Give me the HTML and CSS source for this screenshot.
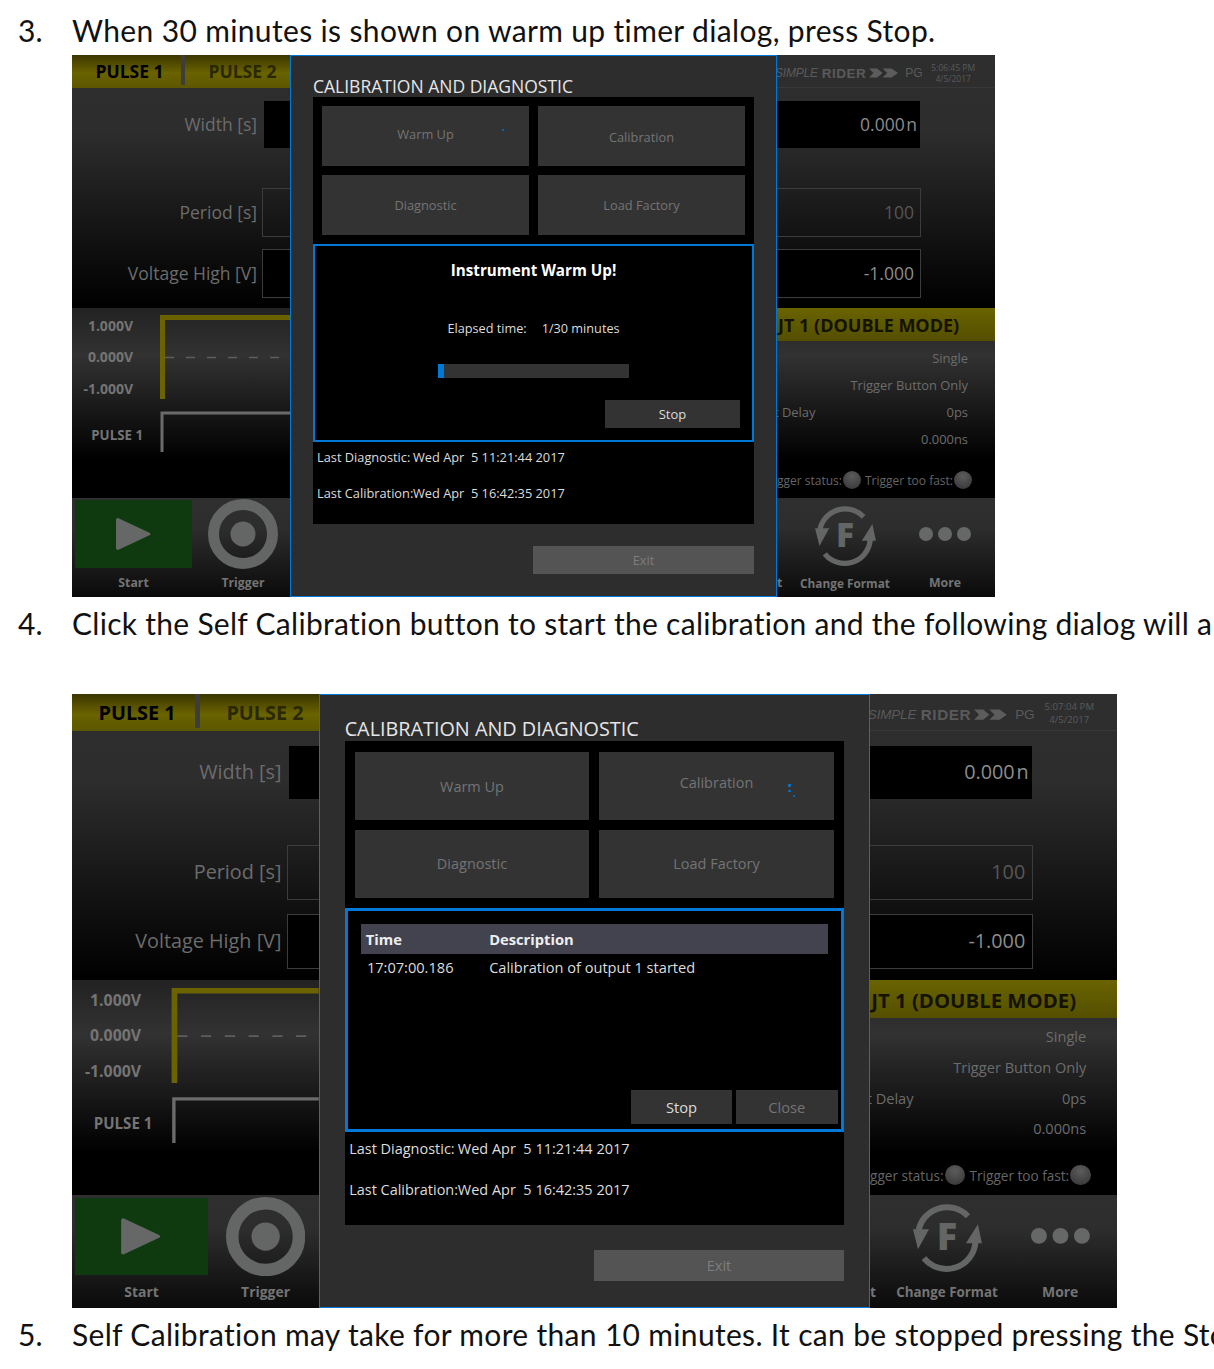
FILE: index.html
```html
<!DOCTYPE html>
<html lang="en">
<head>
<meta charset="utf-8">
<title>Calibration steps</title>
<link rel="stylesheet" href="styles.css">
</head>
<body>
<p class="step step-3"><span class="num">3.</span><span>When 30 minutes is shown on warm up timer dialog, press Stop.</span></p>

<section class="screen">
  <div class="band band-upper">
    <div class="side">
      <div class="tabs"><span class="tab tab-on">PULSE 1</span><span class="tab-sep"></span><span class="tab">PULSE 2</span></div>
      <div class="form-row row-width"><label>Width [s]</label><span class="stub stub-black"></span></div>
      <div class="form-row row-period"><label>Period [s]</label><span class="stub stub-line"></span></div>
      <div class="form-row row-volt"><label>Voltage High [V]</label><span class="stub stub-black stub-line"></span></div>
    </div>
    <div class="side side-right">
      <div class="logo-row">
        <span class="logo-a logo-simple">SIMPLE</span><span class="logo-b">RIDER</span>
        <svg class="chev" viewBox="0 0 32 10"><path d="M0 0h9l6 5-6 5H0l5-5zM15 0h10l7 5-7 5H15l5-5z"/></svg>
        <span class="logo-a logo-pg">PG</span>
        <span class="clock">5:06:45 PM<br>4/5/2017</span>
      </div>
      <div class="field field-black row-width">0.000 n</div>
      <div class="field field-line row-period dim">100</div>
      <div class="field field-black field-line row-volt">-1.000</div>
    </div>
  </div>
  <div class="band band-mid">
    <div class="side">
      <svg class="chart" viewBox="0 0 218 190">
        <path class="wave-a" d="M90.500 91V9.500H218"/>
        <path class="dash" d="M93 49.500H212"/>
        <path class="wave-b" d="M90 144V105H218"/>
        <text class="axis" x="61" y="23">1.000V</text>
        <text class="axis" x="61" y="54">0.000V</text>
        <text class="axis" x="61" y="86">-1.000V</text>
        <text class="axis axis-name" x="71" y="132">PULSE 1</text>
      </svg>
    </div>
    <div class="side side-right">
      <div class="out-head">JT 1 (DOUBLE MODE)</div>
      <ul class="props">
        <li><span></span><span>Single</span></li>
        <li><span></span><span>Trigger Button Only</span></li>
        <li><span class="prop-cut">t Delay</span><span>0ps</span></li>
        <li><span></span><span>0.000ns</span></li>
      </ul>
      <div class="status"><span>gger status:</span><i class="led"></i><span class="status-2">Trigger too fast:</span><i class="led"></i></div>
    </div>
  </div>
  <div class="band band-low">
    <div class="side side-tools">
      <div class="tool tool-start">
        <div class="tool-art art-green"><svg class="ico-play" viewBox="0 0 38 36"><path d="M3 2 35 17a1.500 1.500 0 0 1 0 2L3 34a2 2 0 0 1-2-2V4a2 2 0 0 1 2-2z"/></svg></div>
        <span class="tool-label">Start</span>
      </div>
      <div class="tool tool-trigger">
        <div class="tool-art"><svg class="ico-trig" viewBox="0 0 70 70"><circle cx="35" cy="35" r="29.500" class="ring"/><circle cx="35" cy="35" r="12.500" class="dot"/></svg></div>
        <span class="tool-label">Trigger</span>
      </div>
    </div>
    <div class="side side-right side-tools">
      <span class="tool-label stray">t</span>
      <div class="tool tool-format">
        <div class="tool-art"><svg class="ico-f" viewBox="0 0 85 80"><path class="arc" d="M63 20A29 29 0 0 0 13.600 34"/><path class="arc" d="M19 62A29 29 0 0 0 70.500 46"/><path class="bolt" d="M8 33H24L13 53zM73 28 61 47H77z"/><text class="f-glyph" x="42" y="54">F</text></svg></div>
        <span class="tool-label tool-label-tight">Change Format</span>
      </div>
      <div class="tool tool-more">
        <div class="tool-art"><svg class="ico-more" viewBox="0 0 52 14"><circle cx="7" cy="7" r="7"/><circle cx="26" cy="7" r="7"/><circle cx="45" cy="7" r="7"/></svg></div>
        <span class="tool-label">More</span>
      </div>
    </div>
  </div>

  <div class="dialog">
    <h2 class="dlg-title">CALIBRATION AND DIAGNOSTIC</h2>
    <div class="panel">
      <div class="btn-grid">
        <div class="btn btn-up">Warm Up<span class="spin spin-1"></span></div>
        <div class="btn btn-down">Calibration</div>
        <div class="btn">Diagnostic</div>
        <div class="btn">Load Factory</div>
      </div>
      <div class="box box-warm">
        <div class="warm-head">Instrument Warm Up!</div>
        <div class="elapsed"><span>Elapsed time:</span><span>1/30 minutes</span></div>
        <div class="progress"><div class="progress-fill"></div></div>
        <div class="actions"><div class="act act-warm">Stop</div></div>
      </div>
      <div class="last"><span class="last-k">Last Diagnostic:</span><span class="last-v">Wed Apr  5 11:21:44 2017</span></div>
      <div class="last last-2"><span class="last-k">Last Calibration:</span><span class="last-v">Wed Apr  5 16:42:35 2017</span></div>
    </div>
    <div class="exit">Exit</div>
  </div>
</section>

<p class="step step-4"><span class="num">4.</span><span>Click the Self Calibration button to start the calibration and the following dialog will a</span></p>

<section class="screen screen-wide">
  <div class="band band-upper">
    <div class="side">
      <div class="tabs"><span class="tab tab-on">PULSE 1</span><span class="tab-sep"></span><span class="tab">PULSE 2</span></div>
      <div class="form-row row-width"><label>Width [s]</label><span class="stub stub-black"></span></div>
      <div class="form-row row-period"><label>Period [s]</label><span class="stub stub-line"></span></div>
      <div class="form-row row-volt"><label>Voltage High [V]</label><span class="stub stub-black stub-line"></span></div>
    </div>
    <div class="side side-right">
      <div class="logo-row">
        <span class="logo-a logo-simple">SIMPLE</span><span class="logo-b">RIDER</span>
        <svg class="chev" viewBox="0 0 32 10"><path d="M0 0h9l6 5-6 5H0l5-5zM15 0h10l7 5-7 5H15l5-5z"/></svg>
        <span class="logo-a logo-pg">PG</span>
        <span class="clock">5:07:04 PM<br>4/5/2017</span>
      </div>
      <div class="field field-black row-width">0.000 n</div>
      <div class="field field-line row-period dim">100</div>
      <div class="field field-black field-line row-volt">-1.000</div>
    </div>
  </div>
  <div class="band band-mid">
    <div class="side">
      <svg class="chart" viewBox="0 0 218 190">
        <path class="wave-a" d="M90.500 91V9.500H218"/>
        <path class="dash" d="M93 49.500H212"/>
        <path class="wave-b" d="M90 144V105H218"/>
        <text class="axis" x="61" y="23">1.000V</text>
        <text class="axis" x="61" y="54">0.000V</text>
        <text class="axis" x="61" y="86">-1.000V</text>
        <text class="axis axis-name" x="71" y="132">PULSE 1</text>
      </svg>
    </div>
    <div class="side side-right">
      <div class="out-head">JT 1 (DOUBLE MODE)</div>
      <ul class="props">
        <li><span></span><span>Single</span></li>
        <li><span></span><span>Trigger Button Only</span></li>
        <li><span class="prop-cut">t Delay</span><span>0ps</span></li>
        <li><span></span><span>0.000ns</span></li>
      </ul>
      <div class="status"><span>gger status:</span><i class="led"></i><span class="status-2">Trigger too fast:</span><i class="led"></i></div>
    </div>
  </div>
  <div class="band band-low">
    <div class="side side-tools">
      <div class="tool tool-start">
        <div class="tool-art art-green"><svg class="ico-play" viewBox="0 0 38 36"><path d="M3 2 35 17a1.500 1.500 0 0 1 0 2L3 34a2 2 0 0 1-2-2V4a2 2 0 0 1 2-2z"/></svg></div>
        <span class="tool-label">Start</span>
      </div>
      <div class="tool tool-trigger">
        <div class="tool-art"><svg class="ico-trig" viewBox="0 0 70 70"><circle cx="35" cy="35" r="29.500" class="ring"/><circle cx="35" cy="35" r="12.500" class="dot"/></svg></div>
        <span class="tool-label">Trigger</span>
      </div>
    </div>
    <div class="side side-right side-tools">
      <span class="tool-label stray">t</span>
      <div class="tool tool-format">
        <div class="tool-art"><svg class="ico-f" viewBox="0 0 85 80"><path class="arc" d="M63 20A29 29 0 0 0 13.600 34"/><path class="arc" d="M19 62A29 29 0 0 0 70.500 46"/><path class="bolt" d="M8 33H24L13 53zM73 28 61 47H77z"/><text class="f-glyph" x="42" y="54">F</text></svg></div>
        <span class="tool-label tool-label-tight">Change Format</span>
      </div>
      <div class="tool tool-more">
        <div class="tool-art"><svg class="ico-more" viewBox="0 0 52 14"><circle cx="7" cy="7" r="7"/><circle cx="26" cy="7" r="7"/><circle cx="45" cy="7" r="7"/></svg></div>
        <span class="tool-label">More</span>
      </div>
    </div>
  </div>

  <div class="dialog">
    <h2 class="dlg-title">CALIBRATION AND DIAGNOSTIC</h2>
    <div class="panel">
      <div class="btn-grid">
        <div class="btn btn-up2">Warm Up</div>
        <div class="btn btn-cal">Calibration<span class="spin spin-2"></span><span class="spin spin-3"></span><span class="spin spin-4"></span></div>
        <div class="btn">Diagnostic</div>
        <div class="btn">Load Factory</div>
      </div>
      <div class="box box-log">
        <div class="log-head"><span class="log-time">Time</span><span>Description</span></div>
        <div class="log-row"><span class="log-time">17:07:00.186</span><span>Calibration of output 1 started</span></div>
        <div class="actions">
          <div class="act act-log">Stop</div>
          <div class="act act-log act-off">Close</div>
        </div>
      </div>
      <div class="last"><span class="last-k">Last Diagnostic:</span><span class="last-v">Wed Apr  5 11:21:44 2017</span></div>
      <div class="last last-2"><span class="last-k">Last Calibration:</span><span class="last-v">Wed Apr  5 16:42:35 2017</span></div>
    </div>
    <div class="exit">Exit</div>
  </div>
</section>

<p class="step step-5"><span class="num">5.</span><span>Self Calibration may take for more than 10 minutes. It can be stopped pressing the Sto</span></p>
<div class="cut-mark"></div>
</body>
</html>
```
FILE: styles.css
```css
* { box-sizing: border-box; }
html, body { margin: 0; padding: 0; background: #fff; overflow: hidden; height: 1369px; }
body { font-family: "Lato", "Open Sans", sans-serif; color: #111; }

.step {
  margin: 0; display: flex; white-space: nowrap; width: 1214px; overflow: hidden;
  font-size: 30px; padding-left: 18px; line-height: 40px;
  font-variant-ligatures: none; letter-spacing: .35px;
}
.num { width: 54px; flex: none; letter-spacing: 0; }
.step-3 { height: 55px; padding-top: 10px; }
.step-4 { height: 97px; padding-top: 6px; letter-spacing: .28px; }
.step-5 { height: 58px; padding-top: 6px; letter-spacing: .32px; }
.cut-mark { width: 3px; height: 1px; margin-left: 74px; margin-top: 4px; background: #888; }

.screen {
  position: relative; width: 923px; height: 542px; margin-left: 72px; overflow: hidden;
  display: flex; flex-direction: column;
  font-family: "Open Sans", "Noto Sans", sans-serif; color: #6c6c6c;
}
.screen-wide { zoom: 1.132; margin-left: 63.6px; }

.band { display: flex; justify-content: space-between; flex: none; }
.band-upper { height: 253px; background: linear-gradient(#2e2e2e 0, #2d2d2d 30%, #000 100%); }
.band-mid { height: 190px; background: linear-gradient(#222 0, #323232 25%, #000 80%); }
.band-low { height: 99px; background: linear-gradient(#2f2f2f 0, #2d2d2d 30%, #0a0a0a 100%); }
.side { width: 218px; flex: none; }

.tabs {
  height: 33px; display: flex; align-items: center; padding-bottom: 1px;
  background: linear-gradient(#3a3600, #6a6300 55%, #5c5600);
  font-size: 17.500px; font-weight: 700; color: #2a2800;
}
.tab { flex: 1; text-align: center; padding-left: 10px; }
.tab-on { color: #000; flex: none; width: 109px; padding-left: 6px; }
.tab-sep { width: 4px; height: 30px; background: #3d3d3d; flex: none; margin-bottom: 2px; }

.form-row { display: flex; justify-content: flex-end; align-items: center; gap: 5px; height: 49px; font-size: 17.500px; }
.form-row label { padding-bottom: 2px; }
.form-row.row-width { margin-top: 13px; height: 47px; gap: 7px; }
.form-row.row-period { margin-top: 40px; }
.form-row.row-volt { margin-top: 12px; }
.stub { width: 28px; height: 100%; }
.row-width .stub { width: 26px; }
.stub-black { background: #000; }
.stub-line { border: 1px solid #3c3c3c; border-right: 0; }

.side-right { display: flex; flex-direction: column; }
.logo-row {
  height: 33px; display: flex; align-items: center; padding-top: 4px;
  border-bottom: 1px solid #383838; font-family: "Liberation Sans", sans-serif;
  color: #5a5a5a; font-size: 12px; white-space: nowrap;
}
.logo-a { font-style: italic; font-weight: 400; letter-spacing: -0.2px; }
.logo-simple { margin-left: -2px; }
.logo-b { font-weight: 700; margin-left: 4px; font-size: 13.500px; letter-spacing: .5px; }
.logo-pg { font-style: normal; margin-left: 7px; }
.chev { width: 29px; height: 10px; margin-left: 3px; fill: #5c5c5c; }
.clock { margin-left: 9px; font-size: 8.500px; line-height: 11px; text-align: center; font-family: "Open Sans", sans-serif; margin-top: -1px; }

.field {
  width: 144px; height: 49px; display: flex; align-items: center; justify-content: flex-end;
  padding: 0 6px 2px 0; font-size: 17.500px; color: #8c8c8c;
}
.field.row-width { margin-top: 13px; height: 47px; width: 143px; padding-right: 3px; word-spacing: -3px; }
.field.row-period { margin-top: 40px; }
.field.row-volt { margin-top: 12px; }
.field-black { background: #000; }
.field-line { border: 1px solid #3c3c3c; border-left: 0; }
.dim { color: #565656; }

.chart { display: block; width: 218px; height: 190px; }
.chart path { fill: none; }
.wave-a { stroke: #6a6300; stroke-width: 5; }
.wave-b { stroke: #6b6b6b; stroke-width: 3; }
.dash { stroke: #5e5e5e; stroke-width: 1.500; stroke-dasharray: 9 12; }
.axis { font-family: "Open Sans", sans-serif; font-size: 14px; font-weight: 700; fill: #747474; text-anchor: end; }
.axis-name { font-size: 13.300px; }

.out-head {
  height: 33px; display: flex; align-items: center; padding: 1px 0 0 1px;
  background: linear-gradient(#6a6300, #544f00);
  font-size: 18px; font-weight: 700; color: #141200; white-space: nowrap;
}
.props { list-style: none; margin: 0; padding: 3px 27px 0 5px; font-size: 12.900px; }
.props li { display: flex; justify-content: space-between; height: 27px; align-items: center; }
.prop-cut { margin-left: -8px; }
.status { display: flex; align-items: center; margin-top: 19px; font-size: 12px; white-space: nowrap; color: #666; }
.status-2 { margin-left: 4px; }
.led {
  width: 18px; height: 18px; border-radius: 50%; margin-left: 1px; flex: none;
  background: radial-gradient(circle at 50% 30%, #5c5c5c, #3b3b3b 80%);
}

.side-tools { display: flex; flex-direction: row; align-items: flex-start; position: relative; }
.tool { display: flex; flex-direction: column; align-items: center; }
.tool-art { height: 68px; margin-top: 2px; display: flex; align-items: center; justify-content: center; }
.tool-label { font-size: 12.300px; font-weight: 700; color: #747474; white-space: nowrap; margin-top: 7px; line-height: 16px; }
.tool-label-tight { font-size: 11.800px; }
.tool-start { width: 119px; margin-left: 2px; }
.art-green { width: 117px; background: #0f3a10; }
.ico-play { width: 38px; height: 36px; fill: #666867; }
.tool-trigger { width: 70px; margin-left: 15px; }
.ico-trig { width: 70px; height: 70px; flex: none; }
.ring { fill: none; stroke: #646665; stroke-width: 11; }
.dot { fill: #646665; }
.stray { margin-top: 77px; width: 6px; }
.tool-format { width: 110px; margin-left: 7px; }
.ico-f { width: 75px; height: 71px; flex: none; }
.arc { fill: none; stroke: #646665; stroke-width: 6; }
.bolt { fill: #646665; }
.f-glyph { font-family: "Open Sans", sans-serif; font-size: 38px; font-weight: 800; fill: #646665; text-anchor: middle; }
.tool-more { width: 70px; margin-left: 10px; }
.ico-more { width: 52px; height: 14px; fill: #666867; }

.dialog {
  position: absolute; left: 218px; top: 0; width: 487px; height: 542px;
  border: 1px solid #0078d7; background: #2d2d2d; padding: 0 22px;
  display: flex; flex-direction: column;
}
.dlg-title {
  margin: 0; height: 41px; flex: none; display: flex; align-items: flex-end;
  font-size: 17.500px; font-weight: 400; color: #e6e6e6; line-height: 22px; white-space: nowrap;
}
.panel { background: #000; height: 427px; flex: none; display: flex; flex-direction: column; }
.btn-grid { padding: 9px; display: grid; grid-template-columns: 207px 207px; grid-auto-rows: 60px; gap: 9px; }
.btn {
  background: #333; color: #747474; font-size: 12.800px; position: relative;
  display: flex; align-items: center; justify-content: center;
}
.btn-up { padding-bottom: 5px; }
.btn-down { padding-top: 2px; }
.btn-up2 { padding-top: 1px; }
.btn-cal { padding-bottom: 6px; }
.spin { position: absolute; width: 2px; height: 2px; border-radius: 50%; background: #0078d7; }
.spin-1 { left: 180px; top: 23px; }
.spin-2 { left: 167px; top: 29px; }
.spin-3 { left: 167px; top: 34px; }
.spin-4 { left: 171px; top: 38px; }

.box { height: 198px; flex: none; border: 2.700px solid #0078d7; display: flex; flex-direction: column; color: #ddd; }
.box-warm { align-items: center; }
.warm-head { margin-top: 14px; line-height: 20px; font-size: 15.200px; font-weight: 700; color: #fff; }
.elapsed { margin-top: 38px; line-height: 20px; font-size: 12.700px; display: flex; gap: 15px; color: #ddd; }
.progress { margin-top: 26px; width: 191px; height: 14px; background: #333; flex: none; }
.progress-fill { width: 6px; height: 100%; background: #0078d7; }
.actions { margin-top: auto; display: flex; justify-content: flex-end; gap: 3px; align-self: stretch; }
.box-warm .actions { margin: auto 12px 12px 0; }
.act { height: 28px; background: #333; display: flex; align-items: center; justify-content: center; font-size: 13px; color: #dcdcdc; }
.act-warm { width: 135px; }
.box-log .actions { margin: auto 3px 4px 0; }
.act-log { width: 90px; height: 30px; }
.act-off { color: #747474; }

.log-head { margin: 12px 12px 0; height: 26.500px; background: #434350; display: flex; align-items: center; font-size: 13px; font-weight: 700; color: #eee; }
.log-row { margin: 1px 12px 0; height: 20px; display: flex; align-items: center; font-size: 12.900px; color: #ddd; }
.log-time { width: 113px; padding-left: 4px; flex: none; }
.log-row .log-time { padding-left: 5px; }

.last { height: 30px; display: flex; align-items: center; padding-left: 4px; font-size: 12.800px; color: #ddd; white-space: pre; }
.last-2 { margin-top: 6px; }
.last-k { width: 96px; flex: none; }

.exit {
  margin-top: 22px; align-self: flex-end; width: 221px; height: 28px; background: #545454;
  display: flex; align-items: center; justify-content: center; font-size: 12.800px; color: #7d7d7d;
}
```
